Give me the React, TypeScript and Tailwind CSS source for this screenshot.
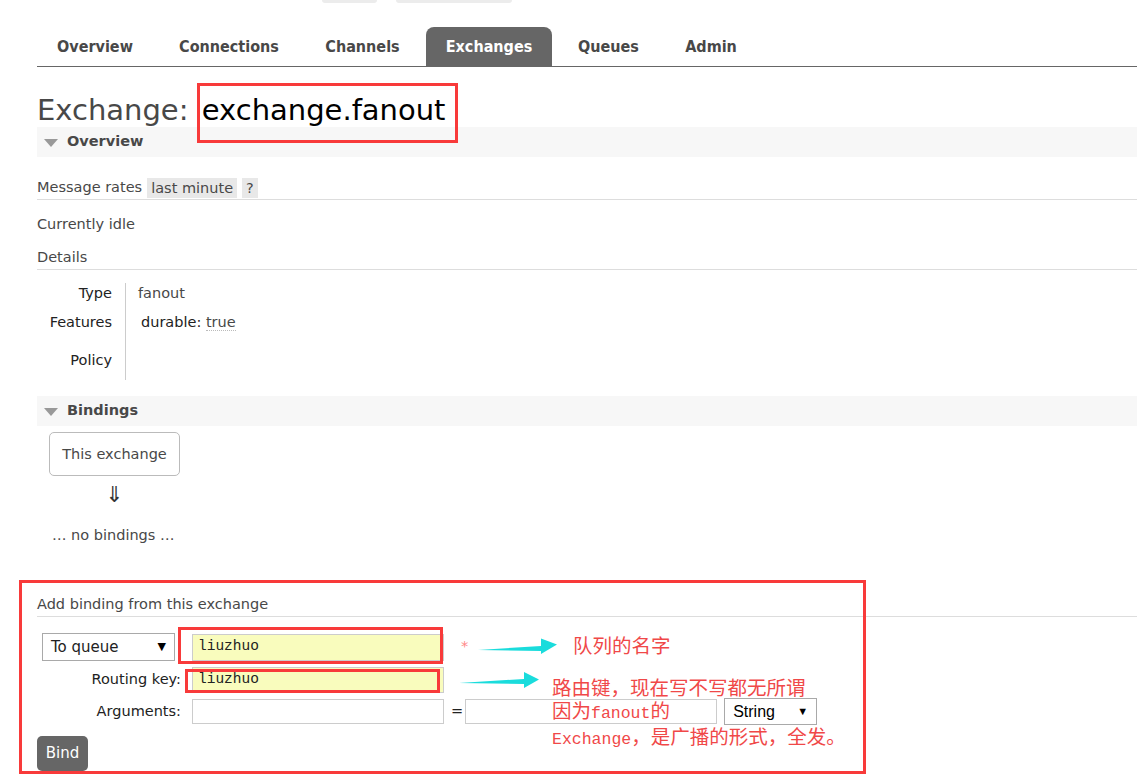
import React from "react";

const tabs = [
  { name: "Overview", w: "w-[116px]" },
  { name: "Connections", w: "w-[140px]" },
  { name: "Channels", w: "w-[115px]" },
  { name: "Exchanges", w: "w-[126px]", active: true },
  { name: "Queues", w: "w-[101px]" },
  { name: "Admin", w: "w-[92px]" },
];

const SectionBar = ({ title }: { title: string }) => (
  <div className="flex h-[30px] items-center bg-[#f7f7f7]">
    <svg width="14" height="8" viewBox="0 0 14 8" className="ml-[7px] mt-[2px]">
      <polygon points="0,0 14,0 7,8" fill="#999" />
    </svg>
    <span className="ml-[9px] font-bold text-[#484848]">{title}</span>
  </div>
);

const RedBox = ({ className }: { className: string }) => (
  <div className={"pointer-events-none absolute border-[3px] border-[#f83a3a] " + className} />
);

const FakeSelect = ({ label, className }: { label: string; className: string }) => (
  <div
    className={
      "flex items-center justify-between border border-[#a9a9a9] bg-white pl-[8px] pr-[8px] " +
      className
    }
  >
    <span>{label}</span>
    <span className="text-[11px] text-black">▼</span>
  </div>
);

export default function App() {
  return (
    <div className="min-h-screen bg-white font-['DejaVu_Sans',Verdana,sans-serif] text-[14.5px] text-[#484848]">
      {/* clipped header buttons */}
      <div className="flex h-[3px]">
        <div className="ml-[322px] w-[55px] rounded-b-[4px] bg-[#ececec]" />
        <div className="ml-[19px] w-[116px] rounded-b-[4px] bg-[#ececec]" />
      </div>

      <div className="pl-[37px]">
        {/* tabs */}
        <ul className="mt-[24px] flex gap-[6px] border-b border-[#666]">
          {tabs.map((t) => (
            <li
              key={t.name}
              className={
                "flex h-[39px] items-center justify-center rounded-t-[8px] font-['DejaVu_Sans_Condensed','Liberation_Sans',sans-serif] text-[16px] font-bold " +
                t.w +
                (t.active ? " bg-[#666] text-white" : " text-[#484848]")
              }
            >
              {t.name}
            </li>
          ))}
        </ul>

        <h1 className="mt-[27px] text-[29px] leading-[33px] font-normal text-[#484848]">
          Exchange:{" "}
          <span className="relative ml-[4px] inline-block text-black">
            exchange.fanout
            <RedBox className="-left-[5px] -right-[13px] -top-[11px] -bottom-[16px]" />
          </span>
        </h1>

        <SectionBar title="Overview" />

        <div className="mt-[20px] flex h-[23px] items-center border-b border-[#ddd] pb-[1px]">
          <span>Message rates</span>
          <span className="ml-[5px] bg-[#e8e8e8] px-[4px] leading-[20px]">last minute</span>
          <span className="ml-[5px] bg-[#e8e8e8] px-[4px] leading-[20px]">?</span>
        </div>

        <div className="mt-[14px] leading-[20px]">Currently idle</div>
        <div className="mt-[13px] border-b border-[#ddd] pb-[2px] leading-[20px]">Details</div>

        <div className="mt-[13px] flex">
          <div className="flex w-[88px] flex-col items-end pr-[13px] text-[#222] leading-[20px]">
            <div className="h-[24px]">Type</div>
            <div className="h-[30px] pt-[5px] box-content">Features</div>
            <div className="pt-[8px]">Policy</div>
          </div>
          <div className="h-[97px] border-l border-[#ccc] pl-[12px] leading-[20px]">
            <div className="h-[24px]">fanout</div>
            <div className="pl-[3px] pt-[5px] text-[#222]">
              durable:{" "}
              <span className="border-b border-dotted border-[#bbb] text-[#484848]">true</span>
            </div>
          </div>
        </div>

        <div className="mt-[16px]">
          <SectionBar title="Bindings" />
        </div>

        <div className="ml-[12px] mt-[6px] flex w-[131px] flex-col items-center">
          <div className="flex h-[44px] w-full items-center justify-center rounded-[5px] border border-[#bbb] pt-[2px]">
            This exchange
          </div>
          <div className="mt-[7px] text-[22px] leading-[24px] text-[#333]">⇓</div>
        </div>
        <div className="ml-[15px] mt-[18px] leading-[20px]">… no bindings …</div>

        {/* add binding form */}
        <div className="relative mt-[49px]">
          <RedBox className="-left-[18px] -top-[14px] h-[194px] w-[847px]" />

          <div className="border-b border-[#ddd] pb-[2px] leading-[20px]">Add binding from this exchange</div>

          <div className="mt-[16px] flex flex-col text-[#222]">
            <div className="flex items-center">
              <div className="w-[155px]">
                <FakeSelect label="To queue" className="ml-[5px] h-[28px] w-[133px] text-[15px]" />
              </div>
              <div className="relative">
                <div className="flex h-[27px] w-[252px] items-center border border-[#ccc] bg-[#f9fcbd] pl-[5px] font-['Liberation_Mono',monospace] text-[14.5px] text-[#222]">
                  liuzhuo
                </div>
                <RedBox className="-left-[14px] right-[1px] -top-[7px] -bottom-[3px]" />
              </div>
              <span className="ml-[17px] text-[#f88]">*</span>
            </div>

            <div className="mt-[6px] flex items-center">
              <div className="w-[144px] text-right">Routing key:</div>
              <div className="relative ml-[11px]">
                <div className="flex h-[26px] w-[252px] items-center border border-[#ccc] bg-[#f9fcbd] pl-[5px] font-['Liberation_Mono',monospace] text-[14.5px] text-[#222]">
                  liuzhuo
                </div>
                <RedBox className="-left-[7px] right-[4px] top-[2px] bottom-0" />
              </div>
            </div>

            <div className="mt-[5px] flex items-center">
              <div className="w-[144px] text-right">Arguments:</div>
              <div className="ml-[11px] h-[25px] w-[252px] border border-[#ccc] bg-white" />
              <span className="ml-[7px]">=</span>
              <div className="ml-[2px] h-[25px] w-[252px] border border-[#ccc] bg-white" />
              <FakeSelect
                label="String"
                className="ml-[7px] h-[27px] w-[93px] font-['Liberation_Sans',Arial,sans-serif] text-[16px] text-black"
              />
            </div>
          </div>

          <button className="mt-[11px] flex h-[35px] w-[51px] items-center justify-center rounded-[5px] bg-[#666] text-[15px] text-white">
            Bind
          </button>

          {/* annotations */}
          <svg width="82" height="18" viewBox="0 0 82 18" className="absolute left-[441px] top-[44px]">
            <polygon points="0,12 63,8 63,0.5 79,6.5 63,16 63,13" fill="#1adcdc" />
          </svg>
          <div className="absolute left-[536px] top-[39px] font-['Noto_Sans_CJK_SC',sans-serif] text-[19.5px] leading-[24px] text-[#f04848]">
            队列的名字
          </div>
          <svg width="82" height="18" viewBox="0 0 82 18" className="absolute left-[422px] top-[78px]">
            <polygon points="0,11 65,7 65,0 80,7.5 65,16 65,12" fill="#1adcdc" />
          </svg>
          <div className="absolute left-[515px] top-[81px] whitespace-nowrap font-['Noto_Sans_CJK_SC',sans-serif] text-[19.5px] leading-[24px] text-[#f04848]">
            <div className="h-[23px]">路由键，现在写不写都无所谓</div>
            <div className="h-[26px]">
              因为<span className="font-['Liberation_Mono',monospace] text-[16.5px] leading-none">fanout</span>的
            </div>
            <div className="h-[25px]">
              <span className="font-['Liberation_Mono',monospace] text-[16.5px] leading-none">Exchange</span>，是广播的形式，全发。
            </div>
          </div>
        </div>
      </div>
    </div>
  );
}
